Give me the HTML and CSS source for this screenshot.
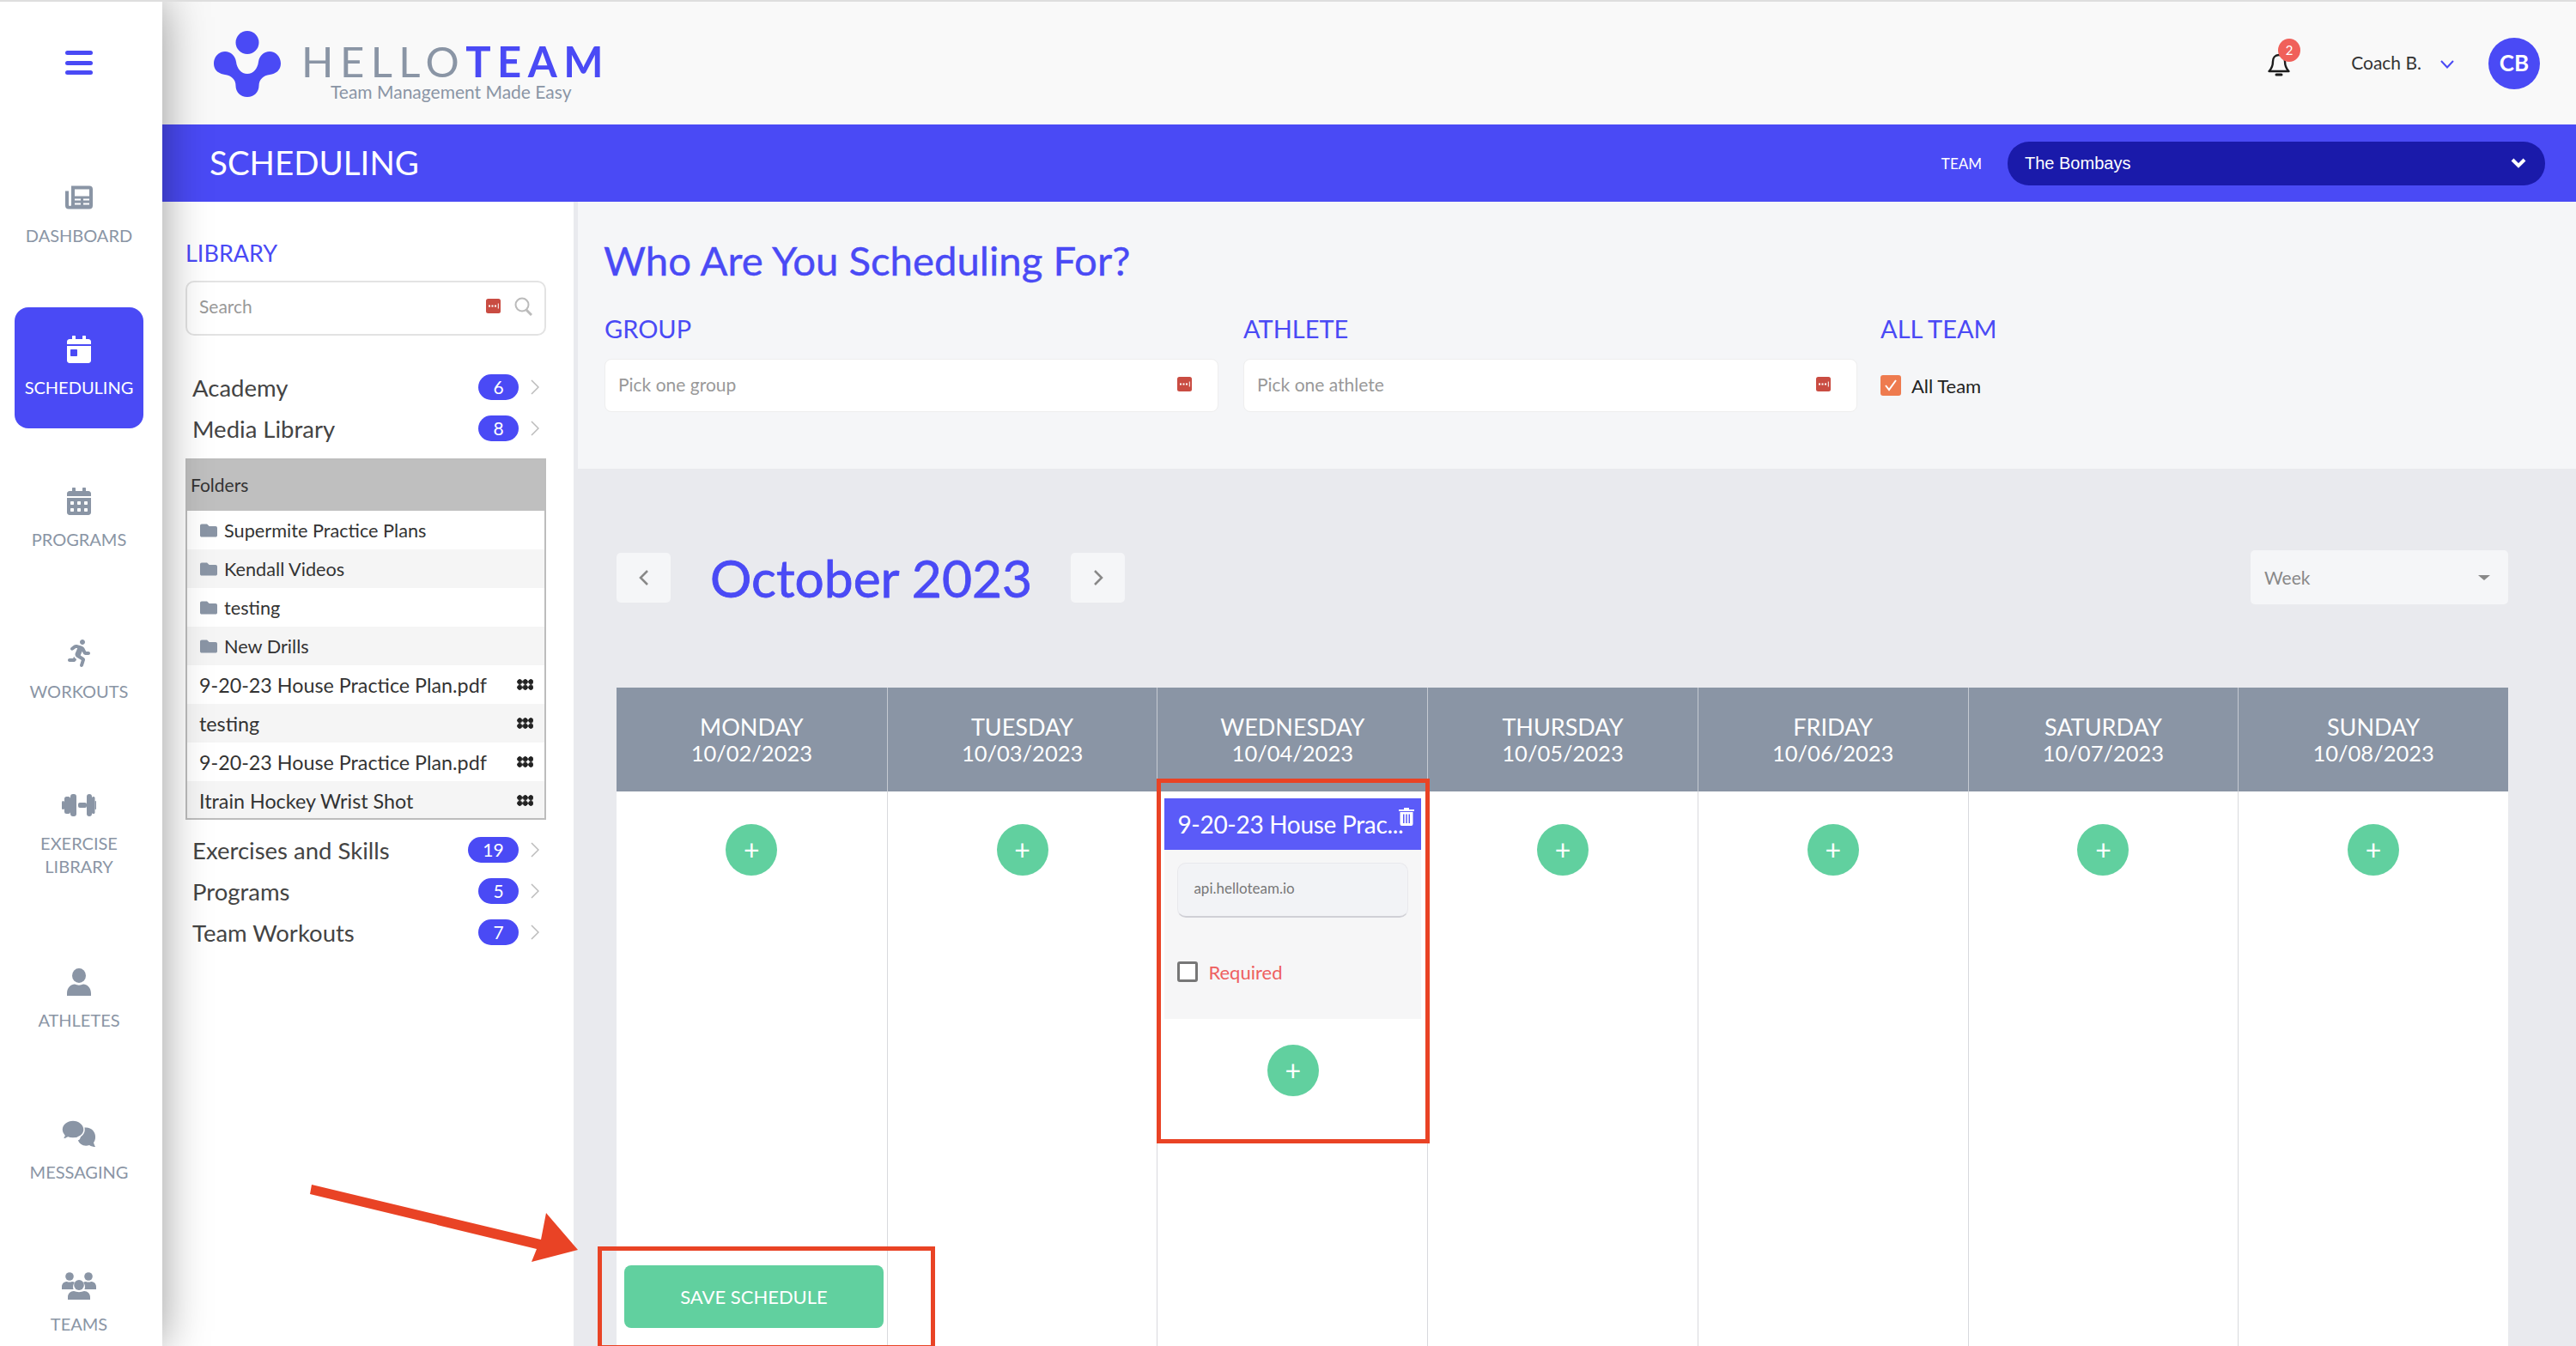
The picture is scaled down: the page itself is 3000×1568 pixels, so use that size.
FILE: index.html
```html
<!DOCTYPE html>
<html lang="en">
<head>
    <meta charset="UTF-8">
    <title>HelloTeam - Scheduling</title>
    <link rel="stylesheet" href="styles.css">
</head>
<body>
<div class="app">
    <aside class="sidebar">
        <div class="burger"><span></span><span></span><span></span></div>
        <nav class="nav">
            <a class="nav-item">
                <svg class="nav-icon" width="32" height="27" viewBox="0 0 32 27"><path d="M7 0h21a4 4 0 0 1 4 4v19a4 4 0 0 1-4 4H4a4 4 0 0 1-4-4V6h4v16a1.5 1.5 0 0 0 3 0V0z"/><path fill="#fff" d="M11 4h17v8H11zM11 15h7v2h-7zM21 15h7v2h-7zM11 20h7v2h-7zM21 20h7v2h-7z"/></svg>
                <span>DASHBOARD</span>
            </a>
            <a class="nav-item active">
                <svg class="nav-icon" width="28" height="32" viewBox="0 0 448 512"><path d="M0 464c0 26.500 21.500 48 48 48h352c26.500 0 48-21.500 48-48V192H0v272zm64-192c0-8.800 7.200-16 16-16h96c8.800 0 16 7.200 16 16v96c0 8.800-7.200 16-16 16H80c-8.800 0-16-7.200-16-16v-96zM400 64h-48V16c0-8.800-7.200-16-16-16h-32c-8.800 0-16 7.200-16 16v48H160V16c0-8.800-7.200-16-16-16h-32c-8.800 0-16 7.200-16 16v48H48C21.500 64 0 85.500 0 112v48h448v-48c0-26.500-21.500-48-48-48z"/></svg>
                <span>SCHEDULING</span>
            </a>
            <a class="nav-item">
                <svg class="nav-icon" width="28" height="32" viewBox="0 0 448 512"><path d="M0 464c0 26.500 21.500 48 48 48h352c26.500 0 48-21.500 48-48V192H0v272zm320-196c0-6.600 5.400-12 12-12h40c6.600 0 12 5.400 12 12v40c0 6.600-5.400 12-12 12h-40c-6.600 0-12-5.400-12-12v-40zm0 128c0-6.600 5.400-12 12-12h40c6.600 0 12 5.400 12 12v40c0 6.600-5.400 12-12 12h-40c-6.600 0-12-5.400-12-12v-40zM192 268c0-6.600 5.400-12 12-12h40c6.600 0 12 5.400 12 12v40c0 6.600-5.400 12-12 12h-40c-6.600 0-12-5.400-12-12v-40zm0 128c0-6.600 5.400-12 12-12h40c6.600 0 12 5.400 12 12v40c0 6.600-5.400 12-12 12h-40c-6.600 0-12-5.400-12-12v-40zM64 268c0-6.600 5.400-12 12-12h40c6.600 0 12 5.400 12 12v40c0 6.600-5.400 12-12 12H76c-6.600 0-12-5.400-12-12v-40zm0 128c0-6.600 5.400-12 12-12h40c6.600 0 12 5.400 12 12v40c0 6.600-5.400 12-12 12H76c-6.600 0-12-5.400-12-12v-40zM400 64h-48V16c0-8.800-7.200-16-16-16h-32c-8.800 0-16 7.200-16 16v48H160V16c0-8.800-7.200-16-16-16h-32c-8.800 0-16 7.200-16 16v48H48C21.500 64 0 85.500 0 112v48h448v-48c0-26.500-21.500-48-48-48z"/></svg>
                <span>PROGRAMS</span>
            </a>
            <a class="nav-item">
                <svg class="nav-icon" width="26" height="32" viewBox="0 0 416 512"><path d="M272 96c26.510 0 48-21.490 48-48S298.510 0 272 0s-48 21.490-48 48 21.490 48 48 48zM113.690 317.470l-14.800 34.520H32c-17.670 0-32 14.330-32 32s14.330 32 32 32h77.450c19.250 0 36.580-11.440 44.110-29.090l8.790-20.520-10.670-6.300c-17.320-10.230-30.060-25.370-37.990-42.610zM384 223.990h-44.030l-26.060-53.250c-12.500-25.550-35.450-44.230-61.780-50.940l-71.080-21.140c-28.300-6.800-57.770-.55-80.840 17.140l-39.670 30.410c-14.030 10.750-16.690 30.830-5.920 44.860s30.840 16.660 44.860 5.920l39.690-30.410c7.670-5.890 17.440-8 25.270-6.140l14.700 4.370-37.460 87.390c-12.620 29.480-1.310 64.010 26.300 80.310l84.980 50.170-27.470 87.730c-5.280 16.860 4.110 34.810 20.970 40.090 3.190 1 6.410 1.480 9.580 1.480 13.610 0 26.230-8.770 30.520-22.450l31.640-101.060c5.910-20.770-2.890-43.080-21.640-54.390l-61.240-36.140 31.310-78.280 20.270 41.430c8 16.340 24.920 26.890 43.110 26.890H384c17.670 0 32-14.330 32-32s-14.330-31.990-32-31.990z"/></svg>
                <span>WORKOUTS</span>
            </a>
            <a class="nav-item tall">
                <svg class="nav-icon" width="40" height="26" viewBox="0 0 40 26"><rect x="0" y="8" width="3" height="10" rx="1.500"/><rect x="3" y="3" width="7" height="20" rx="2.500"/><rect x="10" y="0" width="7" height="26" rx="3"/><rect x="19" y="10" width="10" height="6" rx="2"/><rect x="29" y="0" width="6" height="26" rx="3"/><rect x="35" y="3" width="3.500" height="20" rx="1.500"/><rect x="38.500" y="8" width="1.500" height="10" rx=".7"/></svg>
                <span>EXERCISE<br>LIBRARY</span>
            </a>
            <a class="nav-item">
                <svg class="nav-icon" width="28" height="32" viewBox="0 0 28 32"><ellipse cx="14" cy="8.500" rx="8" ry="8.500"/><path d="M0 32v-3c0-6.500 5-10.500 9-10.500 3 1.500 7 1.500 10 0 4 0 9 4 9 10.500v3z"/></svg>
                <span>ATHLETES</span>
            </a>
            <a class="nav-item">
                <svg class="nav-icon" width="40" height="32" viewBox="0 0 40 32"><path d="M22 19c-3 0-1-9 3-10 8-2 15 4 14 12-.4 2-1 4-2 5 .6 2 1.400 4 2 5-2 0-5-.5-7-2-6 2-12-1-13-6 1 0 2 0 3-4z"/><path d="M13 0C6 0 0 5 0 11c0 3 1 5 3 7-.5 1.500-1.500 3-3 4 3 0 5.500-1 7-2 2 1 4 1 6 1 7.500 0 13-4.500 13-10S20.500 0 13 0z" stroke="#fff" stroke-width="1.500"/></svg>
                <span>MESSAGING</span>
            </a>
            <a class="nav-item">
                <svg class="nav-icon" width="40" height="32" viewBox="0 0 40 32"><circle cx="9" cy="5" r="4.800"/><circle cx="31" cy="5" r="4.800"/><path d="M0 20v-3c0-4 3-6 6-6 1.500.8 4 .8 6 0 1.200 0 2 .3 3 1-2 2-2.500 5-1.500 8zM40 20v-3c0-4-3-6-6-6-1.500.8-4 .8-6 0-1.200 0-2 .3-3 1 2 2 2.500 5 1.500 8z"/><ellipse cx="20" cy="15" rx="5.800" ry="6"/><path d="M7 32v-3c0-4 3-7 7-7 3.500 1.500 8.500 1.500 12 0 4 0 7 3 7 7v3z"/></svg>
                <span>TEAMS</span>
            </a>
        </nav>
    </aside>

    <div class="page">
        <header class="topbar">
            <div class="brand">
                <svg width="78" height="77" viewBox="0 0 78 77" fill="#4a4af5"><ellipse cx="39" cy="13.500" rx="13.500" ry="13.500"/><path d="M13 24C20 24 25 29 26 36C27 44 32 50 39 50C46 50 51 44 52 36C53 29 58 24 65 24C72 24 78 30 78 38C78 46 72 50 65 51C58 52 52.500 56 52.500 64C52.500 71 47 77 39 77C31 77 25.500 71 25.500 64C25.500 56 20 52 13 51C6 50 0 46 0 38C0 30 6 24 13 24Z"/></svg>
                <div class="brand-text">
                    <div class="brand-name"><span class="brand-hello">HELLO</span><span class="brand-team">TEAM</span></div>
                    <div class="brand-tag">Team Management Made Easy</div>
                </div>
            </div>
            <div class="user-area">
                <div class="bell">
                    <svg width="26" height="27" viewBox="0 0 26 27" fill="none" stroke="#1c1c1c" stroke-width="2.400"><path d="M13 2c-4.500 0-7 3.500-7 7.500 0 6-2 9-4.500 11.500h23C22 18.500 20 15.500 20 9.500 20 5.500 17.500 2 13 2z" stroke-linejoin="round"/><path d="M10 25h6" stroke-width="3" stroke-linecap="round"/></svg>
                    <span class="bell-badge">2</span>
                </div>
                <span class="user-name">Coach B.</span>
                <svg class="user-caret" width="16" height="10" viewBox="0 0 16 10" fill="none" stroke="#4a4af5" stroke-width="2"><path d="M1 1l7 7.500L15 1"/></svg>
                <div class="avatar">CB</div>
            </div>
        </header>

        <div class="banner">
            <h1>SCHEDULING</h1>
            <span class="team-label">TEAM</span>
            <div class="team-select">
                <span>The Bombays</span>
                <svg width="18" height="12" viewBox="0 0 18 12" fill="none" stroke="#fff" stroke-width="4"><path d="M2 2l7 7 7-7"/></svg>
            </div>
        </div>

        <div class="content">
            <section class="library">
                <h2 class="library-title">LIBRARY</h2>
                <div class="search">
                    <span class="search-text">Search</span>
                    <svg class="lp-icon" width="17" height="17" viewBox="0 0 17 17"><rect width="17" height="17" rx="2.500" fill="#c94c42"/><path fill="#fff" d="M3 7.500h2v2H3zM6.500 7.500h2v2h-2zM10 7.500h2v2h-2zM13.800 5.500h1v6h-1z"/></svg>
                    <svg width="21" height="22" viewBox="0 0 21 22" fill="none" stroke="#bbb" stroke-width="2"><circle cx="9" cy="9" r="7.500"/><path d="M14 15l6 6" stroke-width="3"/></svg>
                </div>

                <ul class="lib-list top">
                    <li><span>Academy</span><b class="count">6</b><svg class="chev" width="10" height="20" viewBox="0 0 10 20"><path d="M1 2l8 8-8 8"/></svg></li>
                    <li><span>Media Library</span><b class="count">8</b><svg class="chev" width="10" height="20" viewBox="0 0 10 20"><path d="M1 2l8 8-8 8"/></svg></li>
                </ul>

                <div class="folders">
                    <div class="folders-head">Folders</div>
                    <div class="file-row"><svg class="folder-icon" width="22" height="20" viewBox="0 0 512 512"><path d="M464 128H272l-64-64H48C21.490 64 0 85.490 0 112v288c0 26.510 21.490 48 48 48h416c26.510 0 48-21.490 48-48V176c0-26.510-21.490-48-48-48z"/></svg>Supermite Practice Plans</div>
                    <div class="file-row"><svg class="folder-icon" width="22" height="20" viewBox="0 0 512 512"><path d="M464 128H272l-64-64H48C21.490 64 0 85.490 0 112v288c0 26.510 21.490 48 48 48h416c26.510 0 48-21.490 48-48V176c0-26.510-21.490-48-48-48z"/></svg>Kendall Videos</div>
                    <div class="file-row"><svg class="folder-icon" width="22" height="20" viewBox="0 0 512 512"><path d="M464 128H272l-64-64H48C21.490 64 0 85.490 0 112v288c0 26.510 21.490 48 48 48h416c26.510 0 48-21.490 48-48V176c0-26.510-21.490-48-48-48z"/></svg>testing</div>
                    <div class="file-row"><svg class="folder-icon" width="22" height="20" viewBox="0 0 512 512"><path d="M464 128H272l-64-64H48C21.490 64 0 85.490 0 112v288c0 26.510 21.490 48 48 48h416c26.510 0 48-21.490 48-48V176c0-26.510-21.490-48-48-48z"/></svg>New Drills</div>
                    <div class="file-row"><span class="file-name">9-20-23 House Practice Plan.pdf</span><i class="grip"></i></div>
                    <div class="file-row"><span class="file-name">testing</span><i class="grip"></i></div>
                    <div class="file-row"><span class="file-name">9-20-23 House Practice Plan.pdf</span><i class="grip"></i></div>
                    <div class="file-row"><span class="file-name">Itrain Hockey Wrist Shot</span><i class="grip"></i></div>
                </div>

                <ul class="lib-list">
                    <li><span>Exercises and Skills</span><b class="count wide">19</b><svg class="chev" width="10" height="20" viewBox="0 0 10 20"><path d="M1 2l8 8-8 8"/></svg></li>
                    <li><span>Programs</span><b class="count">5</b><svg class="chev" width="10" height="20" viewBox="0 0 10 20"><path d="M1 2l8 8-8 8"/></svg></li>
                    <li><span>Team Workouts</span><b class="count">7</b><svg class="chev" width="10" height="20" viewBox="0 0 10 20"><path d="M1 2l8 8-8 8"/></svg></li>
                </ul>
            </section>

            <main class="main">
                <section class="who">
                    <h2 class="who-title">Who Are You Scheduling For?</h2>
                    <div class="who-grid">
                        <div>
                            <h3 class="who-label">GROUP</h3>
                            <div class="pick"><span>Pick one group</span><svg width="17" height="17" viewBox="0 0 17 17"><rect width="17" height="17" rx="2.500" fill="#c94c42"/><path fill="#fff" d="M3 7.500h2v2H3zM6.500 7.500h2v2h-2zM10 7.500h2v2h-2zM13.800 5.500h1v6h-1z"/></svg></div>
                        </div>
                        <div>
                            <h3 class="who-label">ATHLETE</h3>
                            <div class="pick"><span>Pick one athlete</span><svg width="17" height="17" viewBox="0 0 17 17"><rect width="17" height="17" rx="2.500" fill="#c94c42"/><path fill="#fff" d="M3 7.500h2v2H3zM6.500 7.500h2v2h-2zM10 7.500h2v2h-2zM13.800 5.500h1v6h-1z"/></svg></div>
                        </div>
                        <div class="all-team-col">
                            <h3 class="who-label">ALL TEAM</h3>
                            <div class="all-team">
                                <span class="check-on"><svg width="16" height="14" viewBox="0 0 16 14" fill="none" stroke="#fff" stroke-width="2"><path d="M2 7l4 5 8-11"/></svg></span>
                                All Team
                            </div>
                        </div>
                    </div>
                </section>

                <section class="calendar-area">
                    <div class="cal-nav">
                        <button class="cal-btn"><svg width="12" height="20" viewBox="0 0 12 20" fill="none" stroke="#888" stroke-width="2.500"><path d="M10 2l-8 8 8 8"/></svg></button>
                        <h2 class="cal-title">October 2023</h2>
                        <button class="cal-btn"><svg width="12" height="20" viewBox="0 0 12 20" fill="none" stroke="#888" stroke-width="2.500"><path d="M2 2l8 8-8 8"/></svg></button>
                        <div class="view-select"><span>Week</span><i class="view-caret"></i></div>
                    </div>

                    <div class="week">
                        <div class="day">
                            <div class="day-head">MONDAY<span class="day-date">10/02/2023</span></div>
                            <div class="day-body"><button class="add-btn">+</button></div>
                        </div>
                        <div class="day">
                            <div class="day-head">TUESDAY<span class="day-date">10/03/2023</span></div>
                            <div class="day-body"><button class="add-btn">+</button></div>
                        </div>
                        <div class="day">
                            <div class="day-head">WEDNESDAY<span class="day-date">10/04/2023</span></div>
                            <div class="day-body has-card">
                                <div class="card">
                                    <div class="card-head">
                                        <span class="card-title">9-20-23 House Prac...</span>
                                        <svg class="card-trash" width="18" height="21" viewBox="0 0 18 21" fill="#fff"><path d="M0 2h6V0h6v2h6v2H0zM1.500 5h15v14a2 2 0 0 1-2 2h-11a2 2 0 0 1-2-2zM5 7.500V18h1.500V7.500zM8.300 7.500V18h1.500V7.500zM11.500 7.500V18H13V7.500z" fill-rule="evenodd"/></svg>
                                    </div>
                                    <div class="card-body">
                                        <div class="card-field">api.helloteam.io</div>
                                        <div class="card-check"><span class="check-off"></span>Required</div>
                                    </div>
                                </div>
                                <button class="add-btn">+</button>
                            </div>
                        </div>
                        <div class="day">
                            <div class="day-head">THURSDAY<span class="day-date">10/05/2023</span></div>
                            <div class="day-body"><button class="add-btn">+</button></div>
                        </div>
                        <div class="day">
                            <div class="day-head">FRIDAY<span class="day-date">10/06/2023</span></div>
                            <div class="day-body"><button class="add-btn">+</button></div>
                        </div>
                        <div class="day">
                            <div class="day-head">SATURDAY<span class="day-date">10/07/2023</span></div>
                            <div class="day-body"><button class="add-btn">+</button></div>
                        </div>
                        <div class="day">
                            <div class="day-head">SUNDAY<span class="day-date">10/08/2023</span></div>
                            <div class="day-body"><button class="add-btn">+</button></div>
                        </div>
                    </div>

                    <button class="save-btn">SAVE SCHEDULE</button>
                </section>
            </main>
        </div>
    </div>

    <!-- annotations drawn on top of the screenshot -->
    <div class="mark mark-card"></div>
    <div class="mark mark-save"></div>
    <svg class="mark-arrow" width="320" height="90" viewBox="0 0 320 90"><path fill="#e94325" d="M2 0L269 64 275 33 312 76 258 90 264 75 0 11z"/></svg>
</div>
</body>
</html>
```

FILE: styles.css
```css
* {
    box-sizing: border-box;
}
body {
    margin: 0;
    font-family: Lato, "Open Sans", sans-serif;
    color: #333;
}
h1, h2, h3, ul {
    margin: 0;
    padding: 0;
    font-weight: 400;
}
ul {
    list-style: none;
}
button {
    font-family: inherit;
    border: none;
    padding: 0;
}
.app {
    position: relative;
    display: flex;
    width: 3000px;
    height: 1568px;
    overflow: hidden;
    border-top: 2px solid #dedede;
}

/* sidebar */
.sidebar {
    position: relative;
    z-index: 2;
    width: 189px;
    flex: none;
    background: #fff;
    box-shadow: 0 0 50px rgba(0,0,0,0.4);
}
.burger {
    display: flex;
    flex-direction: column;
    gap: 6.5px;
    width: 32px;
    margin: 57px 0 0 76px;
}
.burger span {
    height: 5px;
    border-radius: 3px;
    background: #4a4af5;
}
.nav {
    display: flex;
    flex-direction: column;
    gap: 36px;
    padding: 0 22px 0 17px;
    margin-top: 94px;
}
.nav-item {
    display: flex;
    flex-direction: column;
    align-items: center;
    height: 141px;
    padding-top: 33px;
    border-radius: 16px;
    color: #8a95a5;
    font-size: 20px;
    line-height: 27px;
    text-align: center;
}
.nav-item.tall {
    height: 170px;
}
.nav-item .nav-icon {
    fill: #8a95a5;
    height: 32px;
    margin-bottom: 15px;
    flex: none;
}
.nav-item.active {
    background: #4a4af5;
    color: #fff;
}
.nav-item.active .nav-icon {
    fill: #fff;
}

/* header */
.page {
    flex: 1;
    min-width: 0;
    display: flex;
    flex-direction: column;
}
.topbar {
    display: flex;
    align-items: center;
    justify-content: space-between;
    height: 143px;
    flex: none;
    padding: 0 42px 0 60px;
    background: #f9f9f9;
}
.brand {
    display: flex;
    align-items: flex-start;
    gap: 24px;
    padding-top: 8px;
}
.brand-text {
    padding-top: 12px;
}
.brand-name {
    font-size: 49px;
    line-height: 46px;
    letter-spacing: 7.5px;
    white-space: nowrap;
}
.brand-hello {
    color: #8a95a5;
    font-weight: 400;
}
.brand-team {
    color: #4a4af5;
    font-weight: 700;
}
.brand-tag {
    margin-left: 34px;
    font-size: 21px;
    line-height: 26px;
    color: #8a95a5;
    white-space: nowrap;
}
.user-area {
    display: flex;
    align-items: center;
}
.bell {
    position: relative;
    width: 26px;
    height: 27px;
    margin-right: 71px;
    margin-top: 4px;
}
.bell-badge {
    position: absolute;
    top: -17px;
    left: 12px;
    width: 26px;
    height: 27px;
    border-radius: 50%;
    background: #f0605a;
    color: #fff;
    font-size: 15px;
    line-height: 27px;
    text-align: center;
}
.user-name {
    padding-bottom: 3px;
    font-size: 21px;
    color: #333;
}
.user-caret {
    margin: 3px 40px 0 22px;
}
.avatar {
    width: 60px;
    height: 60px;
    border-radius: 50%;
    background: #4a4af5;
    color: #fff;
    font-size: 26px;
    font-weight: 700;
    line-height: 59px;
    text-align: center;
}

/* blue bar */
.banner {
    display: flex;
    align-items: center;
    height: 90px;
    flex: none;
    padding: 0 36px 0 55px;
    background: #4a4af5;
    color: #fff;
}
.banner h1 {
    flex: 1;
    padding-bottom: 3px;
    font-size: 38.5px;
    font-weight: 400;
}
.team-label {
    margin-right: 30px;
    font-size: 17px;
}
.team-select {
    display: flex;
    align-items: center;
    justify-content: space-between;
    width: 626px;
    height: 51px;
    padding: 0 22px 0 20px;
    border-radius: 25px;
    background: #1a1aaa;
    font-family: "Liberation Sans", sans-serif;
    font-size: 20px;
}

/* library panel */
.content {
    flex: 1;
    display: flex;
    min-height: 0;
}
.library {
    width: 484px;
    flex: none;
    padding: 44px 32px 0 27px;
    border-right: 5px solid #e9eaee;
    background: #fff;
}
.library-title {
    font-size: 27px;
    line-height: 32px;
    color: #4a4af5;
}
.search {
    display: flex;
    align-items: center;
    height: 64px;
    margin-top: 16px;
    padding: 0 14px 5px 14px;
    border: 2px solid #e3e3e3;
    border-radius: 10px;
}
.search-text {
    flex: 1;
    font-size: 21px;
    color: #999;
}
.lp-icon {
    margin-right: 16px;
}
.lib-list li {
    display: flex;
    align-items: center;
    height: 48px;
    padding-left: 8px;
    padding-bottom: 2px;
    font-size: 27.5px;
    color: #444;
}
.lib-list li span {
    flex: 1;
}
.lib-list.top {
    margin-top: 37px;
}
.chev {
    margin: 0 8px 0 14px;
    fill: none;
    stroke: #bbb;
    stroke-width: 1.5;
}
.count {
    width: 47px;
    height: 30px;
    border-radius: 15px;
    background: #4a4af5;
    color: #fff;
    font-size: 21px;
    font-weight: 400;
    line-height: 29px;
    text-align: center;
}
.count.wide {
    width: 59px;
}
.folders {
    height: 421px;
    margin: 10px 0 12px;
    border: 2px solid #bdbdbd;
    overflow: hidden;
}
.folders-head {
    height: 59px;
    padding-left: 4px;
    background: #bfbfbf;
    font-size: 21px;
    line-height: 58px;
}
.file-row {
    display: flex;
    align-items: center;
    height: 45px;
    padding: 0 13px 0 14px;
    font-size: 21.7px;
    color: #333;
}
.file-row:nth-child(odd) {
    background: #f5f5f5;
}
.file-name {
    flex: 1;
    font-size: 23.3px;
}
.folder-icon {
    margin-right: 7px;
    fill: #8a95a5;
}
.grip {
    width: 19.5px;
    height: 13px;
    background-image: radial-gradient(circle, #222 2.8px, transparent 3.2px);
    background-size: 6.5px 6.5px;
}

/* who section */
.main {
    flex: 1;
    min-width: 0;
    display: flex;
    flex-direction: column;
}
.who {
    height: 311px;
    flex: none;
    padding: 40px 0 0 31px;
    background: #f5f6f8;
}
.who-title {
    margin-left: -1px;
    font-size: 47.3px;
    line-height: 56px;
    color: #4a4af5;
    -webkit-text-stroke: 0.4px #4a4af5;
}
.who-grid {
    display: grid;
    grid-template-columns: 715px 715px 300px;
    column-gap: 29px;
    margin-top: 34px;
}
.who-label {
    font-size: 29px;
    line-height: 36px;
    color: #4a4af5;
}
.pick {
    display: flex;
    align-items: center;
    justify-content: space-between;
    height: 62px;
    margin-top: 17px;
    padding: 0 30px 4px 15px;
    border: 1px solid #eee;
    border-radius: 8px;
    background: #fff;
    font-size: 21px;
    color: #999;
}
.all-team-col {
    margin-left: -2px;
}
.all-team {
    display: flex;
    align-items: center;
    gap: 12px;
    height: 62px;
    margin-top: 17px;
    font-size: 22px;
    color: #222;
}
.check-on {
    display: flex;
    align-items: center;
    justify-content: center;
    width: 24px;
    height: 24px;
    border-radius: 3px;
    background: #ee7b4f;
}

/* calendar */
.calendar-area {
    position: relative;
    flex: 1;
    min-height: 0;
    padding: 95px 79px 0 45px;
    background: #e9eaee;
}
.cal-nav {
    display: flex;
    align-items: center;
    height: 63px;
}
.cal-btn {
    display: flex;
    align-items: center;
    justify-content: center;
    width: 63px;
    height: 58px;
    border-radius: 5px;
    background: #f5f6f8;
}
.cal-title {
    margin: 0 45px 0 46px;
    font-size: 60.5px;
    color: #4a4af5;
    -webkit-text-stroke: 0.8px #4a4af5;
}
.view-select {
    display: flex;
    align-items: center;
    justify-content: space-between;
    width: 300px;
    height: 63px;
    margin-left: auto;
    padding: 0 21px 0 16px;
    border-radius: 5px;
    background: #f5f6f8;
    font-size: 21px;
    color: #888;
}
.view-caret {
    border-top: 6px solid #888;
    border-left: 7px solid transparent;
    border-right: 7px solid transparent;
}
.week {
    display: grid;
    grid-template-columns: repeat(7, minmax(0, 1fr));
    height: 800px;
    margin-top: 97px;
    background: #fff;
}
.day {
    min-width: 0;
}
.day + .day {
    border-left: 1px solid #d8d9dd;
}
.day-head {
    height: 121px;
    padding-top: 30px;
    background: #8a95a5;
    color: #fff;
    font-size: 27px;
    line-height: 31px;
    text-align: center;
}
.day + .day .day-head {
    box-shadow: -1px 0 0 #c5cad2;
}
.day-date {
    display: block;
    font-size: 25.5px;
}
.day-body {
    height: 100%;
    padding-top: 38px;
    text-align: center;
}
.day-body.has-card {
    padding: 8px 7px 0 8px;
}
.add-btn {
    width: 60px;
    height: 60px;
    border-radius: 50%;
    background: #61d09f;
    color: #fff;
    font-size: 32px;
    line-height: 58px;
}
.card {
    margin-bottom: 30px;
    background: #f6f6f7;
    text-align: left;
}
.card-head {
    position: relative;
    height: 60px;
    padding-left: 15px;
    background: #5b5bf8;
    color: #fff;
    line-height: 60px;
}
.card-title {
    display: block;
    white-space: nowrap;
    font-size: 28px;
    letter-spacing: -0.3px;
}
.card-trash {
    position: absolute;
    top: 11px;
    right: 8px;
}
.card-body {
    height: 197px;
    padding: 15px 15px 0;
}
.card-field {
    height: 64px;
    padding: 0 18px 6px;
    border: 1px solid #e8e8ec;
    border-bottom: 2px solid #d0d0d6;
    border-radius: 10px;
    background: #f2f3f6;
    color: #777;
    font-size: 17px;
    line-height: 58px;
}
.card-check {
    display: flex;
    align-items: center;
    gap: 12px;
    margin-top: 51px;
    height: 24px;
    color: #ee6060;
    font-size: 22px;
}
.check-off {
    width: 24px;
    height: 24px;
    border: 3px solid #777;
    border-radius: 3px;
    background: #fff;
}
.save-btn {
    position: absolute;
    left: 54px;
    bottom: 21px;
    width: 302px;
    height: 73px;
    border-radius: 8px;
    background: #61d09f;
    color: #fff;
    font-size: 22px;
}

/* red annotations */
.mark {
    position: absolute;
    z-index: 3;
    border: 5px solid #e94325;
}
.mark-card {
    left: 1347px;
    top: 905px;
    width: 318px;
    height: 425px;
}
.mark-save {
    left: 696px;
    top: 1450px;
    width: 393px;
    height: 120px;
}
.mark-arrow {
    position: absolute;
    z-index: 3;
    left: 361px;
    top: 1378px;
}
```
